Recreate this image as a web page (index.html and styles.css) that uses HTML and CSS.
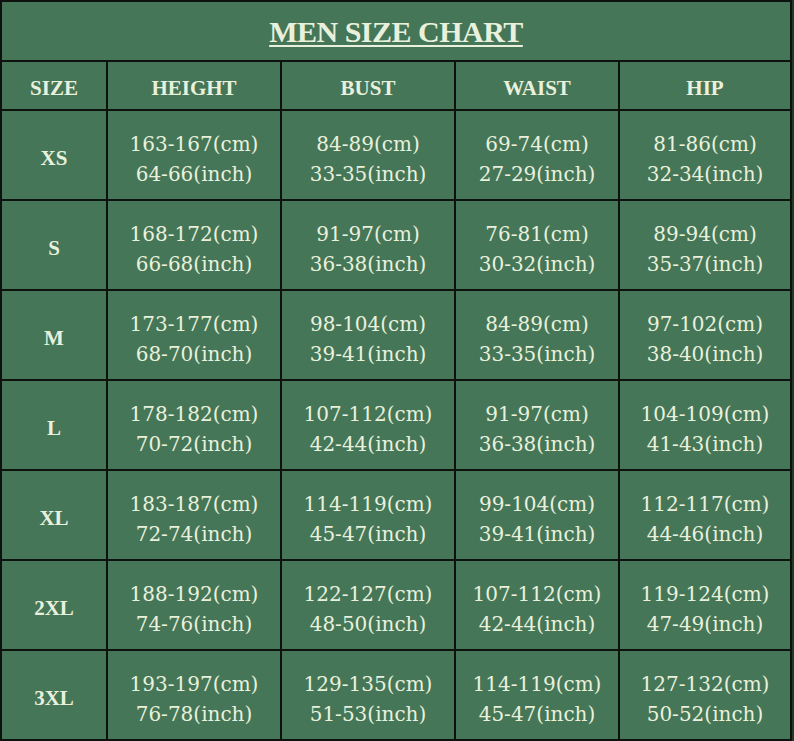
FILE: index.html
```html
<!DOCTYPE html>
<html>
<head>
<meta charset="utf-8">
<title>Men Size Chart</title>
<link rel="stylesheet" href="styles.css">
</head>
<body>
<div class="chart">
  <div class="title"><span>MEN SIZE CHART</span></div>

  <div class="cell head">SIZE</div>
  <div class="cell head">HEIGHT</div>
  <div class="cell head">BUST</div>
  <div class="cell head">WAIST</div>
  <div class="cell head">HIP</div>

  <div class="cell size">XS</div>
  <div class="cell val">163-167(cm)<br>64-66(inch)</div>
  <div class="cell val">84-89(cm)<br>33-35(inch)</div>
  <div class="cell val">69-74(cm)<br>27-29(inch)</div>
  <div class="cell val">81-86(cm)<br>32-34(inch)</div>

  <div class="cell size">S</div>
  <div class="cell val">168-172(cm)<br>66-68(inch)</div>
  <div class="cell val">91-97(cm)<br>36-38(inch)</div>
  <div class="cell val">76-81(cm)<br>30-32(inch)</div>
  <div class="cell val">89-94(cm)<br>35-37(inch)</div>

  <div class="cell size">M</div>
  <div class="cell val">173-177(cm)<br>68-70(inch)</div>
  <div class="cell val">98-104(cm)<br>39-41(inch)</div>
  <div class="cell val">84-89(cm)<br>33-35(inch)</div>
  <div class="cell val">97-102(cm)<br>38-40(inch)</div>

  <div class="cell size">L</div>
  <div class="cell val">178-182(cm)<br>70-72(inch)</div>
  <div class="cell val">107-112(cm)<br>42-44(inch)</div>
  <div class="cell val">91-97(cm)<br>36-38(inch)</div>
  <div class="cell val">104-109(cm)<br>41-43(inch)</div>

  <div class="cell size">XL</div>
  <div class="cell val">183-187(cm)<br>72-74(inch)</div>
  <div class="cell val">114-119(cm)<br>45-47(inch)</div>
  <div class="cell val">99-104(cm)<br>39-41(inch)</div>
  <div class="cell val">112-117(cm)<br>44-46(inch)</div>

  <div class="cell size">2XL</div>
  <div class="cell val">188-192(cm)<br>74-76(inch)</div>
  <div class="cell val">122-127(cm)<br>48-50(inch)</div>
  <div class="cell val">107-112(cm)<br>42-44(inch)</div>
  <div class="cell val">119-124(cm)<br>47-49(inch)</div>

  <div class="cell size">3XL</div>
  <div class="cell val">193-197(cm)<br>76-78(inch)</div>
  <div class="cell val">129-135(cm)<br>51-53(inch)</div>
  <div class="cell val">114-119(cm)<br>45-47(inch)</div>
  <div class="cell val">127-132(cm)<br>50-52(inch)</div>
</div>
</body>
</html>
```
FILE: styles.css
```css
html, body {
  margin: 0;
  padding: 0;
  background: #233a2b;
}
body {
  width: 794px;
  height: 741px;
  overflow: hidden;
}
.chart {
  display: grid;
  grid-template-columns: 104px 172px 172px 162px 170px;
  grid-template-rows: 58px 47px repeat(7, 88px);
  gap: 2px;
  padding: 2px;
  width: 788px;
  background: #0d120e;
  color: #e9f1dd;
}
.title {
  grid-column: 1 / -1;
  background: #467658;
  display: flex;
  align-items: center;
  justify-content: center;
  font-family: "Liberation Serif", serif;
  font-weight: bold;
  font-size: 30px;
  letter-spacing: -0.5px;
}
.title span {
  text-decoration: underline;
  text-decoration-thickness: 2px;
  text-underline-offset: 3px;
  padding-top: 2px;
}
.cell {
  background: #467658;
  display: flex;
  align-items: center;
  justify-content: center;
  text-align: center;
}
.head {
  font-family: "Liberation Serif", serif;
  font-weight: bold;
  font-size: 21px;
  padding-top: 5px;
}
.size {
  font-family: "Liberation Serif", serif;
  font-weight: bold;
  font-size: 21px;
  padding-top: 6px;
}
.val {
  font-family: "DejaVu Serif", serif;
  font-size: 20px;
  line-height: 30px;
  padding-top: 7px;
}
```
